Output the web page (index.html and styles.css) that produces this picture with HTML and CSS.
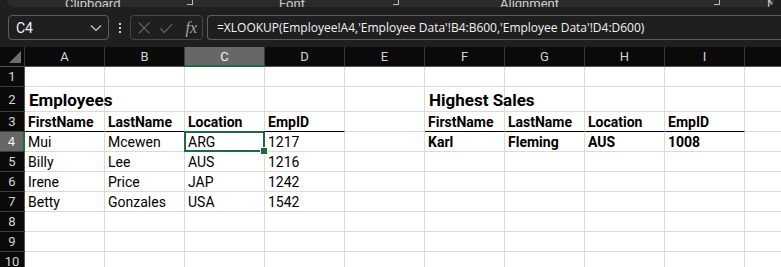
FILE: index.html
```html
<!DOCTYPE html>
<html lang="en">

<head>
    <meta charset="UTF-8">
    <title>Employee Lookup</title>
    <link rel="stylesheet" href="styles.css">
</head>

<body>
    <div class="ribbon">
        <span class="group-label label-clipboard">Clipboard</span>
        <span class="launcher launcher-1"></span>
        <span class="group-label label-font">Font</span>
        <span class="launcher launcher-2"></span>
        <span class="group-label label-align">Alignment</span>
        <span class="launcher launcher-3"></span>
        <span class="group-label label-number">Nu</span>
    </div>

    <div class="formula-bar">
        <div class="name-box">
            <span>C4</span>
            <svg class="chevron" width="12" height="8" viewBox="0 0 12 8">
                <path d="M1 1.5 L6 6.5 L11 1.5" fill="none" stroke="#d0d0d0" stroke-width="1.2" />
            </svg>
        </div>
        <div class="more-dots"><i></i><i></i><i></i></div>
        <div class="fx-buttons">
            <svg width="16" height="16" viewBox="0 0 16 16">
                <path d="M2 2 L14 14 M14 2 L2 14" fill="none" stroke="#6e6e6e" stroke-width="1.2" />
            </svg>
            <svg width="16" height="16" viewBox="0 0 16 16">
                <path d="M1.5 8.5 L6 13 L15 3.5" fill="none" stroke="#6e6e6e" stroke-width="1.2" />
            </svg>
            <span class="fx">fx</span>
        </div>
        <div class="formula-input">=XLOOKUP(Employee!A4,'Employee Data'!B4:B600,'Employee Data'!D4:D600)</div>
    </div>

    <div class="sheet">
        <div class="row head-row">
            <div class="corner"></div>
            <div class="col-h">A</div>
            <div class="col-h">B</div>
            <div class="col-h selected">C</div>
            <div class="col-h">D</div>
            <div class="col-h">E</div>
            <div class="col-h">F</div>
            <div class="col-h">G</div>
            <div class="col-h">H</div>
            <div class="col-h">I</div>
            <div class="col-h">J</div>
        </div>

        <div class="row">
            <div class="row-h">1</div>
            <div class="cell"></div><div class="cell"></div><div class="cell"></div><div class="cell"></div><div class="cell"></div>
            <div class="cell"></div><div class="cell"></div><div class="cell"></div><div class="cell"></div><div class="cell"></div>
        </div>

        <div class="row tall">
            <div class="row-h">2</div>
            <div class="cell title">Employees</div><div class="cell"></div><div class="cell"></div><div class="cell"></div><div class="cell"></div>
            <div class="cell title">Highest Sales</div><div class="cell"></div><div class="cell"></div><div class="cell"></div><div class="cell"></div>
        </div>

        <div class="row">
            <div class="row-h">3</div>
            <div class="cell th">FirstName</div>
            <div class="cell th">LastName</div>
            <div class="cell th">Location</div>
            <div class="cell th">EmpID</div>
            <div class="cell"></div>
            <div class="cell th">FirstName</div>
            <div class="cell th">LastName</div>
            <div class="cell th">Location</div>
            <div class="cell th">EmpID</div>
            <div class="cell"></div>
        </div>

        <div class="row">
            <div class="row-h selected">4</div>
            <div class="cell">Mui</div>
            <div class="cell">Mcewen</div>
            <div class="cell active">ARG</div>
            <div class="cell">1217</div>
            <div class="cell"></div>
            <div class="cell strong">Karl</div>
            <div class="cell strong">Fleming</div>
            <div class="cell strong">AUS</div>
            <div class="cell strong">1008</div>
            <div class="cell"></div>
        </div>

        <div class="row">
            <div class="row-h">5</div>
            <div class="cell">Billy</div>
            <div class="cell">Lee</div>
            <div class="cell">AUS</div>
            <div class="cell">1216</div>
            <div class="cell"></div><div class="cell"></div><div class="cell"></div><div class="cell"></div><div class="cell"></div><div class="cell"></div>
        </div>

        <div class="row">
            <div class="row-h">6</div>
            <div class="cell">Irene</div>
            <div class="cell">Price</div>
            <div class="cell">JAP</div>
            <div class="cell">1242</div>
            <div class="cell"></div><div class="cell"></div><div class="cell"></div><div class="cell"></div><div class="cell"></div><div class="cell"></div>
        </div>

        <div class="row">
            <div class="row-h">7</div>
            <div class="cell">Betty</div>
            <div class="cell">Gonzales</div>
            <div class="cell">USA</div>
            <div class="cell">1542</div>
            <div class="cell"></div><div class="cell"></div><div class="cell"></div><div class="cell"></div><div class="cell"></div><div class="cell"></div>
        </div>

        <div class="row">
            <div class="row-h">8</div>
            <div class="cell"></div><div class="cell"></div><div class="cell"></div><div class="cell"></div><div class="cell"></div>
            <div class="cell"></div><div class="cell"></div><div class="cell"></div><div class="cell"></div><div class="cell"></div>
        </div>

        <div class="row">
            <div class="row-h">9</div>
            <div class="cell"></div><div class="cell"></div><div class="cell"></div><div class="cell"></div><div class="cell"></div>
            <div class="cell"></div><div class="cell"></div><div class="cell"></div><div class="cell"></div><div class="cell"></div>
        </div>

        <div class="row">
            <div class="row-h">10</div>
            <div class="cell"></div><div class="cell"></div><div class="cell"></div><div class="cell"></div><div class="cell"></div>
            <div class="cell"></div><div class="cell"></div><div class="cell"></div><div class="cell"></div><div class="cell"></div>
        </div>
    </div>
</body>

</html>
```

FILE: styles.css
```css
:root {
    --app-bg: #1f1f1f;
    --ribbon-bg: #2b2b2b;
    --box-border: #5e5e5e;
    --header-bg: #0a0a0a;
    --header-line: #3c3c3c;
    --header-text: #d4d4d4;
    --header-selected: #676767;
    --grid-line: #dadada;
    --accent-green: #1f6b41;
}

* {
    margin: 0;
    padding: 0;
    box-sizing: border-box;
}

body {
    width: 781px;
    height: 267px;
    overflow: hidden;
    background-color: var(--app-bg);
    font-family: Roboto, "Noto Sans", sans-serif;
}

/* ribbon (only its bottom edge is visible) */
.ribbon {
    position: relative;
    height: 7px;
    margin: 0 7px;
    background-color: var(--ribbon-bg);
    border-radius: 0 0 7px 7px;
    overflow: hidden;
}

.group-label {
    position: absolute;
    bottom: 0;
    font-size: 13px;
    line-height: 13px;
    color: #cfcfcf;
    transform: translateY(3px);
}

.label-clipboard { left: 58px; }
.label-font { left: 272px; }
.label-align { left: 493px; }
.label-number { left: 760px; }

.launcher {
    position: absolute;
    bottom: 2px;
    width: 6px;
    height: 5px;
    border-right: 1px solid #bdbdbd;
    border-bottom: 1px solid #bdbdbd;
}

.launcher-1 { left: 180px; }
.launcher-2 { left: 386px; }
.launcher-3 { left: 707px; }

/* formula bar */
.formula-bar {
    display: flex;
    align-items: center;
    height: 40px;
    padding: 8px 0 7px 8px;
}

.name-box {
    display: flex;
    align-items: center;
    justify-content: space-between;
    width: 101px;
    height: 25px;
    padding: 0 6px 0 7px;
    border: 1px solid var(--box-border);
    border-radius: 4px;
    color: #f2f2f2;
    font-size: 14px;
}

.more-dots {
    display: flex;
    flex-direction: column;
    gap: 2px;
    margin: 0 9px 0 10px;
}

.more-dots i {
    display: block;
    width: 2px;
    height: 2px;
    background-color: #d0d0d0;
}

.fx-buttons {
    display: flex;
    align-items: center;
    gap: 8px;
    width: 73px;
    height: 25px;
    padding: 0 5px 0 6px;
    border: 1px solid #474747;
    border-radius: 4px;
}

.fx {
    margin-left: 4px;
    font-family: "Liberation Serif", serif;
    font-style: italic;
    font-size: 16px;
    color: #a8a8a8;
}

.formula-input {
    flex: 1;
    height: 25px;
    margin-left: 4px;
    margin-right: -10px;
    padding-left: 9px;
    border: 1px solid var(--box-border);
    border-right: none;
    border-radius: 4px 0 0 4px;
    color: #f2f2f2;
    font-family: "Open Sans", Roboto, sans-serif;
    font-size: 12px;
    line-height: 23px;
    white-space: nowrap;
}

/* sheet grid */
.sheet {
    background-color: #fff;
}

.row {
    display: grid;
    grid-template-columns: 25px repeat(10, 80px);
    height: 20px;
}

.row.tall {
    height: 25px;
}

.head-row {
    background-color: var(--header-bg);
}

.corner {
    position: relative;
    border-right: 1px solid var(--header-line);
    border-bottom: 1px solid #555;
}

.corner::after {
    content: "";
    position: absolute;
    right: 3px;
    bottom: 3px;
    border-left: 12px solid transparent;
    border-bottom: 12px solid #6e6e6e;
}

.col-h {
    display: flex;
    align-items: center;
    justify-content: center;
    border-right: 1px solid var(--header-line);
    border-bottom: 1px solid #555;
    color: var(--header-text);
    font-size: 13px;
}

.col-h.selected {
    background-color: var(--header-selected);
    color: #f4f4f4;
    border-bottom: 2px solid var(--accent-green);
}

.row-h {
    display: flex;
    align-items: center;
    justify-content: center;
    background-color: var(--header-bg);
    border-bottom: 1px solid var(--header-line);
    border-right: 1px solid #555;
    color: var(--header-text);
    font-size: 13px;
}

.row-h.selected {
    background-color: var(--header-selected);
    color: #f4f4f4;
    border-right: 2px solid var(--accent-green);
}

.cell {
    position: relative;
    display: flex;
    align-items: flex-end;
    padding: 0 0 0 3px;
    border-right: 1px solid var(--grid-line);
    border-bottom: 1px solid var(--grid-line);
    color: #000;
    font-size: 14px;
    line-height: 18px;
    white-space: nowrap;
}

.cell.title {
    padding-left: 4px;
    font-size: 17px;
    font-weight: 700;
    line-height: 22px;
    overflow: visible;
}

.cell.th {
    font-weight: 700;
    border-bottom: 1px solid #000;
}

.cell.strong {
    font-weight: 700;
}

.cell.active::after {
    content: "";
    position: absolute;
    top: -1px;
    left: -1px;
    right: -1px;
    bottom: -1px;
    border: 2px solid var(--accent-green);
}

.cell.active::before {
    content: "";
    position: absolute;
    right: -4px;
    bottom: -4px;
    width: 6px;
    height: 6px;
    background-color: var(--accent-green);
    border: 1px solid #fff;
    z-index: 1;
}
```
